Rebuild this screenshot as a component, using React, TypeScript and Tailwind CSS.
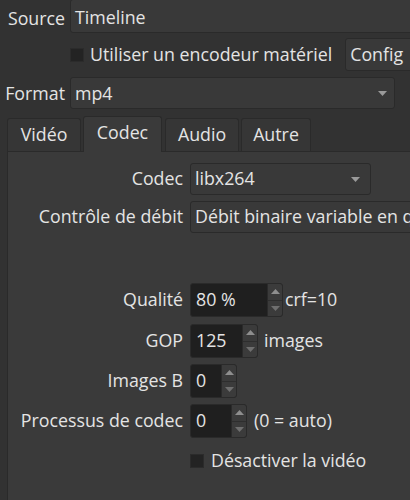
import React from 'react';

const font = { fontFamily: '"Open Sans", "Noto Sans", sans-serif' };

const Arrow = () => (
  <svg width="9" height="5" viewBox="0 0 9 5" className="shrink-0">
    <path d="M0 0 H9 L4.5 5 Z" fill="#9a9a9a" />
  </svg>
);

const Check = () => (
  <span className="inline-block w-[14px] h-[14px] bg-[#232323] border border-[#2b2b2b] shrink-0" />
);

function Spin({ value, width }: { value: string; width: string }) {
  return (
    <div className={`flex h-[34px] ${width} rounded-[3px] border border-[#2a2a2a] bg-[#1f1f1f] overflow-hidden`}>
      <span className="flex-1 flex items-center pl-[5px]">{value}</span>
      <div className="w-[15px] flex flex-col border-l border-[#2a2a2a] bg-[#3b3b3b]">
        <div className="flex-1 flex items-center justify-center border-b border-[#2e2e2e]">
          <svg width="9" height="5" viewBox="0 0 9 5"><path d="M0 5 H9 L4.5 0 Z" fill="#8e8e8e" /></svg>
        </div>
        <div className="flex-1 flex items-center justify-center">
          <svg width="9" height="5" viewBox="0 0 9 5"><path d="M0 0 H9 L4.5 5 Z" fill="#6f6f6f" /></svg>
        </div>
      </div>
    </div>
  );
}

function Row({ label, children }: { label: string; children: React.ReactNode }) {
  return (
    <div className="flex items-center">
      <span className="w-[182px] pr-[7px] text-right shrink-0 whitespace-nowrap">{label}</span>
      {children}
    </div>
  );
}

export default function App() {
  const tabs = ['Vidéo', 'Codec', 'Audio', 'Autre'];
  return (
    <div style={font} className="w-[410px] h-[500px] overflow-hidden bg-[#323232] text-[#e4e4e4] text-[17.8px] leading-none">
      <div className="w-[460px]">
        {/* source */}
        <div className="flex items-center">
          <span className="w-[70px] pr-[5px] text-right translate-y-[2px]">Source</span>
          <div className="flex-1 h-[34px] -mt-[1px] flex items-center px-[4px] pt-[3px] bg-[#393939] border border-[#2a2a2a] rounded-[3px]">Timeline</div>
        </div>
        {/* hardware encoder */}
        <div className="flex items-center mt-[5px] pl-[70px] h-[33px]">
          <Check />
          <span className="ml-[6px] whitespace-nowrap">Utiliser un encodeur matériel</span>
          <div className="ml-[13px] h-[33px] px-[4px] flex items-center bg-[#393939] border border-[#2a2a2a] rounded-[3px] w-[80px] shrink-0">Config</div>
        </div>
        {/* format */}
        <div className="flex items-center mt-[6px]">
          <span className="w-[70px] pr-[5px] text-right translate-y-[1px]">Format</span>
          <div className="w-[325px] h-[32px] flex items-center justify-between px-[4px] pr-[7px] bg-[#393939] border border-[#2a2a2a] rounded-[3px]">
            <span className="translate-y-[1px]">mp4</span>
            <Arrow />
          </div>
        </div>
        {/* tabs */}
        <div className="flex items-end gap-[2px] pl-[7px] mt-[6px] h-[36px]">
          {tabs.map((t) =>
            t === 'Codec' ? (
              <div key={t} className="h-[36px] w-[79px] flex items-center justify-center bg-[#3a3a3a] border border-b-0 border-[#2a2a2a] rounded-t-[3px] -mb-[1px] relative z-10 pb-[3px]">{t}</div>
            ) : (
              <div key={t} className={`h-[33px] ${t === 'Vidéo' ? 'w-[74px]' : t === 'Audio' ? 'w-[74px] ml-[1px]' : 'w-[70px]'} flex items-center justify-center bg-[#363636] border border-b-0 border-[#2a2a2a] rounded-t-[3px]`}>{t}</div>
            )
          )}
        </div>
        {/* panel */}
        <div className="ml-[7px] h-[360px] bg-[#3a3a3a] border border-[#2a2a2a] pt-[11px] flex flex-col">
          <Row label="Codec">
            <div className="w-[181px] h-[32px] flex items-center justify-between px-[4px] pr-[10px] bg-[#393939] border border-[#2a2a2a] rounded-[3px]">
              <span>libx264</span>
              <Arrow />
            </div>
          </Row>
          <div className="mt-[6px]">
            <Row label="Contrôle de débit">
              <div className="flex-1 h-[32px] flex items-center px-[4px] bg-[#393939] border border-[#2a2a2a] rounded-[3px] whitespace-nowrap overflow-hidden">Débit binaire variable en qualité</div>
            </Row>
          </div>
          <div className="mt-[50px]">
            <Row label="Qualité">
              <Spin value="80 %" width="w-[93px]" />
              <span className="ml-[2px]">crf=10</span>
            </Row>
          </div>
          <div className="mt-[7px]">
            <Row label="GOP">
              <Spin value="125" width="w-[68px]" />
              <span className="ml-[6px]">images</span>
            </Row>
          </div>
          <div className="mt-[6px]">
            <Row label="Images B">
              <Spin value="0" width="w-[47px]" />
            </Row>
          </div>
          <div className="mt-[6px]">
            <Row label="Processus de codec">
              <Spin value="0" width="w-[57px]" />
              <span className="ml-[7px]">(0 = auto)</span>
            </Row>
          </div>
          <div className="mt-[14px] pl-[182px] flex items-center">
            <Check />
            <span className="ml-[7px]">Désactiver la vidéo</span>
          </div>
        </div>
      </div>
    </div>
  );
}
